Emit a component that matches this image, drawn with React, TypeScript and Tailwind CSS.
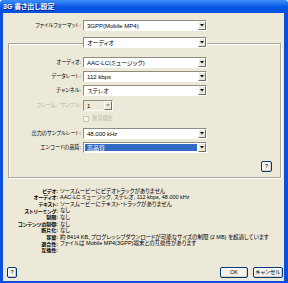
import React from "react";

const FONT =
  "font-['Liberation_Sans','Noto_Sans_CJK_JP',sans-serif] [font-feature-settings:'palt']";

function Arrow({ gray }: { gray?: boolean }) {
  return (
    <svg width="4" height="3" viewBox="0 0 4 3">
      <path d="M0 0 H4 L2 2.5 Z" fill={gray ? "#a09e94" : "#000"} />
    </svg>
  );
}

function Select({
  value,
  w,
  highlight,
  disabled,
}: {
  value: string;
  w: string;
  highlight?: boolean;
  disabled?: boolean;
}) {
  return (
    <div
      className={`${w} h-[11px] flex shrink-0 border border-t-[#8f8c82] border-l-[#8f8c82] border-b-[#fff] border-r-[#fff] ${
        disabled ? "bg-[#ece9d8]" : "bg-white"
      }`}
    >
      <div className="flex-1 flex p-[1px] min-w-0">
        <div
          className={`flex-1 flex items-center pl-[2px] text-[6px] leading-none whitespace-nowrap overflow-hidden ${
            highlight ? "bg-[#316ac5] text-white" : "text-black"
          }`}
        >
          {value}
        </div>
      </div>
      <div className="w-[8px] flex items-center justify-center bg-[#ece9d8] border border-t-[#fff] border-l-[#fff] border-b-[#716f64] border-r-[#716f64]">
        <Arrow gray={disabled} />
      </div>
    </div>
  );
}

function Row({
  label,
  children,
  lw,
  mt,
  disabled,
}: {
  label: string;
  children: React.ReactNode;
  lw: string;
  mt: string;
  disabled?: boolean;
}) {
  return (
    <div className={`flex items-center gap-[2px] ${mt}`}>
      <div
        className={`${lw} text-right text-[5.2px] leading-none whitespace-nowrap ${
          disabled ? "text-[#b5b2a4]" : "text-black"
        }`}
      >
        {label}
      </div>
      {children}
    </div>
  );
}

function Btn({ children, w }: { children: React.ReactNode; w: string }) {
  return (
    <div
      className={`${w} h-[11px] flex items-center justify-center text-[5.5px] leading-none text-black bg-[#f4f3ee] border border-[#003c74] rounded-[2px] shadow-[inset_-1px_-1px_0_#d6d0c5,inset_1px_1px_0_#fff]`}
    >
      {children}
    </div>
  );
}

const info: [string, string][] = [
  ["ビデオ:", "ソースムービーにビデオトラックがありません"],
  ["オーディオ:", "AAC-LC ミュージック, ステレオ, 112 kbps, 48.000 kHz"],
  ["テキスト:", "ソースムービーにテキスト・トラックがありません"],
  ["ストリーミング:", "なし"],
  ["制限:", "なし"],
  ["コンテンツの制御:", "なし"],
  ["断片化:", "なし"],
  ["容量:", "約 8414 KB、プログレッシブダウンロードが可能なサイズの制限 (2 MB) を超過しています"],
  ["適合性:", "ファイルは Mobile MP4(3GPP)端末との互換性があります"],
  ["互換性:", ""],
];

export default function App() {
  return (
    <div className={`w-[288px] h-[283px] flex flex-col overflow-hidden ${FONT}`}>
      <div className="h-[13px] shrink-0 flex items-center pl-[3px] bg-gradient-to-b from-[#3d8ff8] via-[#0a5ae8] to-[#0350e0] rounded-t-[3px]">
        <span className="text-white font-bold text-[7px] leading-none [text-shadow:1px_1px_0_#0a1e80]">
          3G 書き出し設定
        </span>
      </div>
      <div className="flex-1 flex flex-col bg-[#ece9d8] border-l-[3px] border-r-[4px] border-b-[2px] border-[#0b4fdc] pt-[7px]">
        <Row label="ファイルフォーマット:" lw="w-[78px]" mt="">
          <Select value="3GPP(Mobile MP4)" w="w-[124px]" />
        </Row>

        <div className="ml-[5px] w-[273px] mt-[12px] h-[135px] border border-[#aca899] shadow-[inset_1px_1px_0_#fff,1px_1px_0_#fff] flex flex-col">
          <div className="ml-[74px] -mt-[7px]">
            <Select value="オーディオ" w="w-[124px]" />
          </div>
          <Row label="オーディオ:" lw="w-[72px]" mt="mt-[9px]">
            <Select value="AAC-LC(ミュージック)" w="w-[124px]" />
          </Row>
          <Row label="データレート:" lw="w-[72px]" mt="mt-[3px]">
            <Select value="112 kbps" w="w-[124px]" />
          </Row>
          <Row label="チャンネル:" lw="w-[72px]" mt="mt-[3px]">
            <Select value="ステレオ" w="w-[124px]" />
          </Row>
          <Row label="フレーム／サンプル:" lw="w-[72px]" mt="mt-[4px]" disabled>
            <Select value="1" w="w-[30px]" disabled />
          </Row>
          <div className="flex items-center ml-[74px] mt-[5px] gap-[3px]">
            <div className="w-[6px] h-[6px] border border-[#c9c7ba] bg-[#f5f4ea]" />
            <span className="text-[5.2px] leading-none text-[#b5b2a4]">無音検出</span>
          </div>
          <Row label="出力のサンプルレート:" lw="w-[72px]" mt="mt-[6px]">
            <Select value="48.000 kHz" w="w-[124px]" />
          </Row>
          <Row label="エンコードの品質:" lw="w-[72px]" mt="mt-[3px]">
            <Select value="高品質" w="w-[124px]" highlight />
          </Row>
          <div className="flex justify-end mt-[8px] mr-[8px]">
            <Btn w="w-[11px]">?</Btn>
          </div>
        </div>

        <div className="mt-[10px] flex flex-col">
          {info.map(([k, v]) => (
            <div key={k} className="flex gap-[2px] h-[6.6px] items-center">
              <div className="w-[55px] text-right text-[5px] leading-none font-bold whitespace-nowrap text-black">
                {k}
              </div>
              <div className="text-[5.5px] leading-none whitespace-nowrap text-black">{v}</div>
            </div>
          ))}
        </div>

        <div className="mt-auto mb-[3px] flex items-center pl-[4px] pr-[1px]">
          <Btn w="w-[10px]">?</Btn>
          <div className="flex-1" />
          <Btn w="w-[28px]">OK</Btn>
          <div className="w-[5px]" />
          <Btn w="w-[30px]">キャンセル</Btn>
        </div>
      </div>
    </div>
  );
}
